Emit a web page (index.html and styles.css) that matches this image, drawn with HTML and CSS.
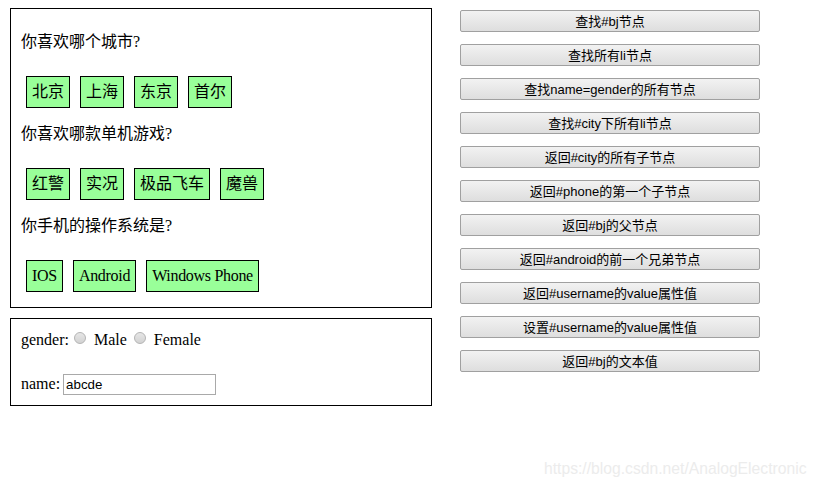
FILE: index.html
```html
<!doctype html>
<html>
<head>
    <meta charset="UTF-8">
    <title>DOM查询</title>
    <link rel="stylesheet" href="styles.css">
</head>
<body>
<div class="m-page">
    <div class="m-total">
        <div class="inner">
            <p class="hd">你喜欢哪个城市?</p>
            <ul class="bd" id="city">
                <li id="bj">北京</li>
                <li>上海</li>
                <li>东京</li>
                <li>首尔</li>
            </ul>
            <p class="hd">你喜欢哪款单机游戏?</p>
            <ul class="bd" id="game">
                <li id="rl">红警</li>
                <li>实况</li>
                <li>极品飞车</li>
                <li>魔兽</li>
            </ul>
            <p class="hd">你手机的操作系统是?</p>
            <ul class="bd bd-en" id="phone">
                <li>IOS</li>
                <li id="android">Android</li>
                <li>Windows Phone</li>
            </ul>
        </div>
        <div class="inner inner-form">
            <div class="row">
                <span>gender:</span>
                <input class="radio" type="radio" name="gender" value="male"/>
                <span>Male</span>
                <input class="radio" type="radio" name="gender" value="female"/>
                <span>Female</span>
            </div>
            <div class="row row-name">
                <span>name:</span>
                <input class="txt" type="text" name="name" id="username" value="abcde"/>
            </div>
        </div>
    </div>
    <div class="m-btns" id="btnList">
        <button id="btn01">查找#bj节点</button>
        <button id="btn02">查找所有li节点</button>
        <button id="btn03">查找name=gender的所有节点</button>
        <button id="btn04">查找#city下所有li节点</button>
        <button id="btn05">返回#city的所有子节点</button>
        <button id="btn06">返回#phone的第一个子节点</button>
        <button id="btn07">返回#bj的父节点</button>
        <button id="btn08">返回#android的前一个兄弟节点</button>
        <button id="btn09">返回#username的value属性值</button>
        <button id="btn10">设置#username的value属性值</button>
        <button id="btn11">返回#bj的文本值</button>
    </div>
</div>
<span class="watermark">https://blog.csdn.net/AnalogElectronic</span>
</body>
</html>
```

FILE: styles.css
```css
html, body, p, ul { margin: 0; padding: 0; }
ul { list-style: none; }
body { margin: 8px 0 0 10px; font: 16px 'Liberation Serif', 'Noto Sans CJK SC', serif; color: #000; background: #fff; }

.m-page { display: flex; align-items: flex-start; }
.m-total { width: 450px; }

/* 左侧的框 */
.inner { width: 400px; border: 1px solid #000; padding: 10px; }
.inner + .inner { margin-top: 10px; }
.inner .hd { line-height: 21px; margin-top: 15px; }
.inner .hd:first-child { margin-top: 12px; }
.inner .bd { display: flex; gap: 10px; padding-left: 5px; margin-top: 24px; }
.inner .bd:last-child { margin-bottom: 5px; }
.inner .bd li { line-height: 20px; padding: 5px; border: 1px solid #000; background-color: #99ff99; }
.inner .bd-en li { letter-spacing: -0.3px; }

/* 表单 */
.inner-form .row { display: flex; align-items: center; height: 22px; line-height: 20px; }
.inner-form .row-name { margin-top: 22px; }
.radio { -webkit-appearance: none; appearance: none; width: 12px; height: 12px; margin: 0 8px 4px 5px; border: 1px solid #b4b4b4; border-radius: 50%; background: linear-gradient(#e6e6e6, #d2d2d2); }
.radio + span + .radio { margin-left: 7px; }
.txt { box-sizing: border-box; width: 153px; height: 21px; margin: 0 0 0 3px; padding: 0 2px; border: 1px solid #a9a9a9; font: 13.33px 'Liberation Sans', Arial, sans-serif; color: #000; }

/* 右侧按钮 */
.m-btns { display: flex; flex-direction: column; gap: 12px; margin-top: 2px; }
.m-btns button { width: 300px; height: 22px; padding: 0 0 2px; border: 1px solid #a0a0a0; border-radius: 2px; background: linear-gradient(#f2f2f2, #dedede); font: 13px 'Liberation Sans', 'Noto Sans CJK SC', sans-serif; color: #000; }

.watermark { position: absolute; left: 544px; top: 460px; font: 15.7px 'Liberation Sans', Arial, sans-serif; color: #ececec; }
```
